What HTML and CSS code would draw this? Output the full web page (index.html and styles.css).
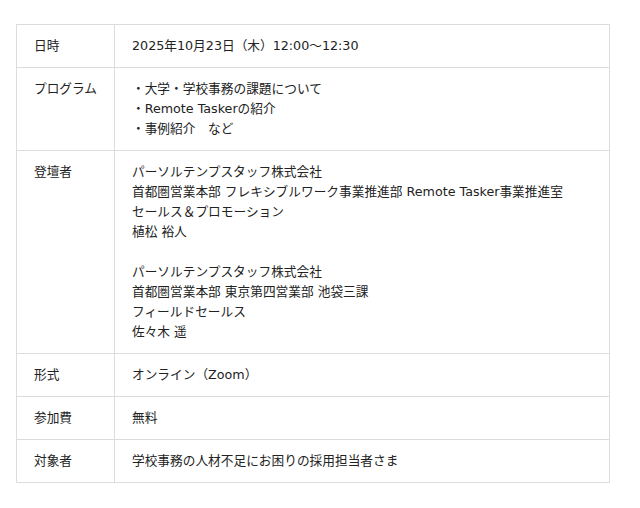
FILE: index.html
```html
<!DOCTYPE html>
<html lang="ja">
<head>
<meta charset="utf-8">
<link rel="stylesheet" href="styles.css">
</head>
<body>
<div class="wrap">
<table class="info">
  <tr>
    <th>日時</th>
    <td>2025年10月23日（木）12:00〜12:30</td>
  </tr>
  <tr>
    <th>プログラム</th>
    <td>・大学・学校事務の課題について<br>・Remote Taskerの紹介<br>・事例紹介　など</td>
  </tr>
  <tr>
    <th>登壇者</th>
    <td>パーソルテンプスタッフ株式会社<br>首都圏営業本部 フレキシブルワーク事業推進部 Remote Tasker事業推進室<br>セールス＆プロモーション<br>植松 裕人<br><br>パーソルテンプスタッフ株式会社<br>首都圏営業本部 東京第四営業部 池袋三課<br>フィールドセールス<br>佐々木 遥</td>
  </tr>
  <tr>
    <th>形式</th>
    <td>オンライン（Zoom）</td>
  </tr>
  <tr>
    <th>参加費</th>
    <td>無料</td>
  </tr>
  <tr>
    <th>対象者</th>
    <td>学校事務の人材不足にお困りの採用担当者さま</td>
  </tr>
</table>
</div>
</body>
</html>
```

FILE: styles.css
```css
html, body {
  margin: 0;
  padding: 0;
  background: #ffffff;
}
body {
  font-family: "DejaVu Sans", "Noto Sans CJK JP", sans-serif;
  font-size: 12.7px;
  line-height: 20px;
  color: #222222;
}
.wrap {
  padding: 24px 16px;
}
.info {
  width: 594px;
  border-collapse: collapse;
}
.info th,
.info td {
  border: 1px solid #dcdcdc;
  padding: 11px 17px;
  text-align: left;
  vertical-align: top;
  font-weight: normal;
}
.info th {
  width: 68px;
  padding-right: 12px;
  white-space: nowrap;
}
```
